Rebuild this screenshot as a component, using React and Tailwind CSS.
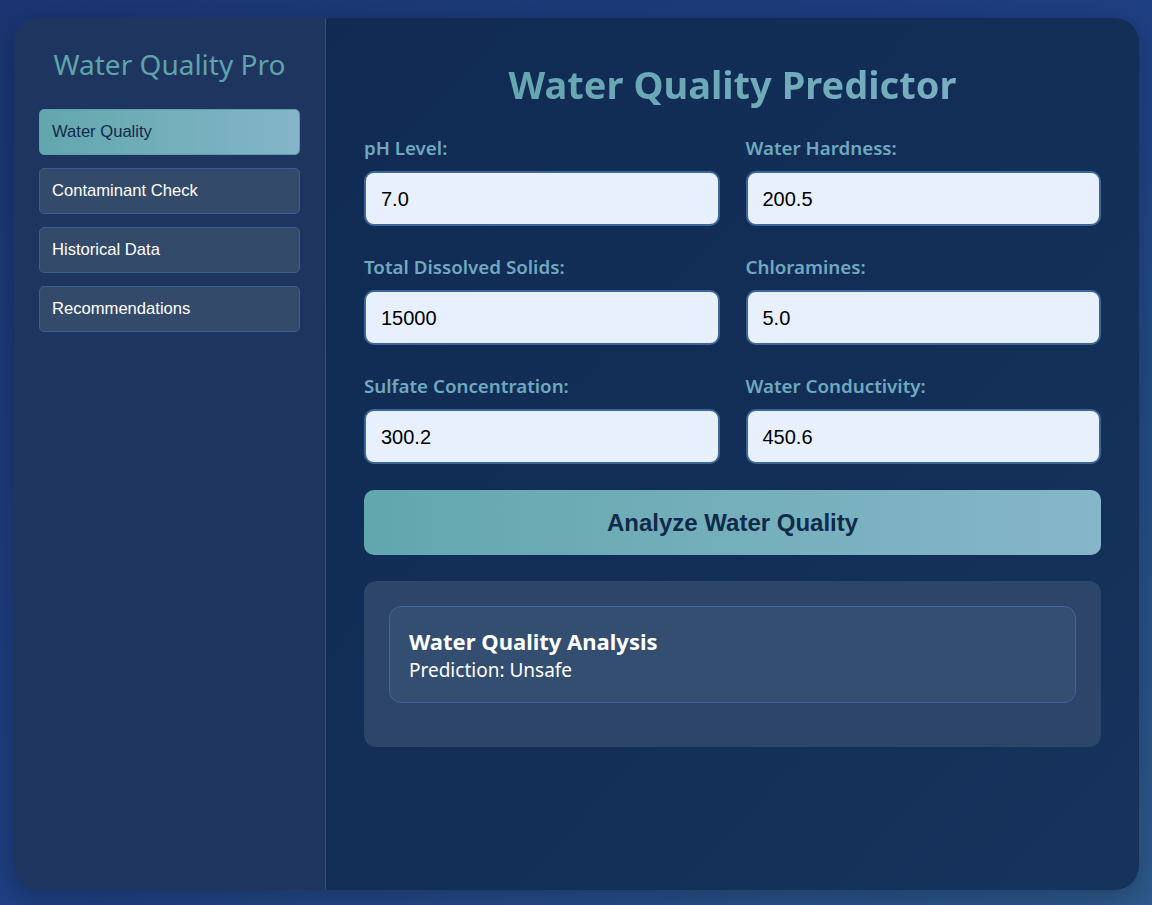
import React from "react";

const head = { fontFamily: '"Noto Sans", "Open Sans", sans-serif' };
const arial = { fontFamily: '"Liberation Sans", Arial, sans-serif' };

const fields = [
  ["pH Level:", "7.0"],
  ["Water Hardness:", "200.5"],
  ["Total Dissolved Solids:", "15000"],
  ["Chloramines:", "5.0"],
  ["Sulfate Concentration:", "300.2"],
  ["Water Conductivity:", "450.6"],
];

const nav = ["Water Quality", "Contaminant Check", "Historical Data", "Recommendations"];

export default function App() {
  return (
    <div className="min-h-[905px] w-full bg-gradient-to-br from-[#1b3572] via-[#1e3f82] to-[#2e5a8c] pl-[14px] pr-[13px] pt-[18px] pb-[15px]">
      <div className="flex h-[872px] overflow-hidden rounded-[24px] shadow-[0_8px_30px_rgba(0,0,0,0.25)]">
        <aside className="flex w-[312px] shrink-0 flex-col border-r border-[#2f4f7e] bg-[#1e365f] px-[25px] pt-[26px]">
          <h2 className="text-center text-[28px] font-normal leading-[40px] text-[#5fa3ab]" style={head}>
            Water Quality Pro
          </h2>
          <nav className="mt-[25px] flex flex-col gap-[13px]">
            {nav.map((n, i) => (
              <div
                key={n}
                className={
                  i === 0
                    ? "flex h-[46px] items-center rounded-[5px] border border-[#5d9fb0] bg-gradient-to-r from-[#62a7ad] to-[#84b5c8] pl-[12px] text-[16.6px] text-[#112a4a]"
                    : "flex h-[46px] items-center rounded-[5px] border border-[#3b5e92] bg-[#334a6b] pl-[12px] text-[16.6px] text-white"
                }
                style={arial}
              >
                {n}
              </div>
            ))}
          </nav>
        </aside>
        <main className="flex-1 bg-gradient-to-br from-[#102a53] to-[#15335c] px-[38px] pt-[38px]">
          <h1
            className="bg-gradient-to-r from-[#5fa3ab] to-[#7cb2c6] bg-clip-text text-center text-[38px] font-bold leading-[56px] text-transparent"
            style={head}
          >
            Water Quality Predictor
          </h1>
          <div className="mt-[23px] grid grid-cols-2 gap-x-[26px] gap-y-[28px]">
            {fields.map(([l, v]) => (
              <div key={l} className="flex flex-col">
                <label className="text-[18.75px] font-semibold leading-[26px] text-[#6fa9bf]" style={head}>
                  {l}
                </label>
                <div
                  className="mt-[10px] flex h-[55px] items-center rounded-[10px] border-2 border-[#3d6799] bg-[#e8f0fe] pl-[15px] text-[20px] text-black"
                  style={arial}
                >
                  {v}
                </div>
              </div>
            ))}
          </div>
          <button
            className="mt-[26px] flex h-[65px] w-full items-center justify-center rounded-[10px] bg-gradient-to-r from-[#62a7ad] to-[#86b6c9] text-[24px] font-bold text-[#0f2a4a]"
            style={arial}
          >
            Analyze Water Quality
          </button>
          <div className="mt-[26px] rounded-[12px] bg-[#2c4568] px-[25px] pt-[25px] pb-[44px]">
            <div className="rounded-[12px] border border-[#3e66a0] bg-[#344e72] px-[19px] pt-[19px] pb-[18px]" style={head}>
              <div className="text-[22px] font-bold leading-[30px] text-white">Water Quality Analysis</div>
              <div className="text-[19px] leading-[28px] text-white">Prediction: Unsafe</div>
            </div>
          </div>
        </main>
      </div>
    </div>
  );
}
